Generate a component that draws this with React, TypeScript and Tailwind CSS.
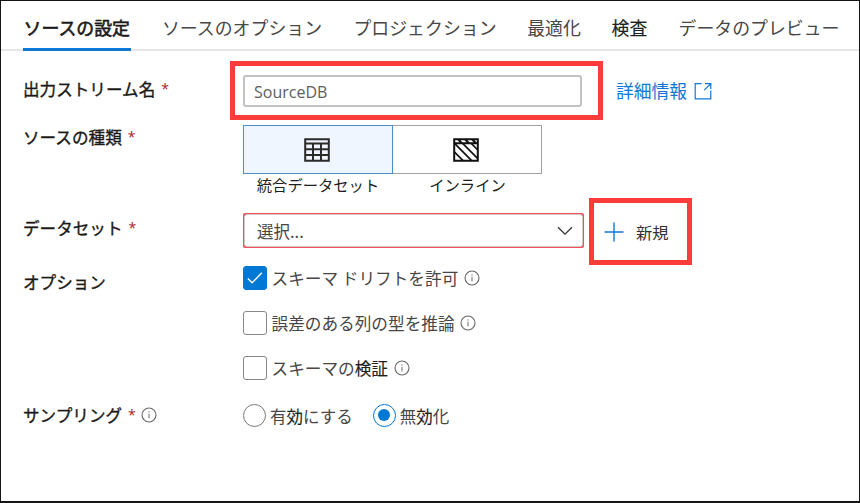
import type { ReactNode } from "react";

function InfoIcon() {
  return (
    <svg width="16" height="16" viewBox="0 0 16 16" fill="none" className="shrink-0">
      <circle cx="8" cy="8" r="7" stroke="#666" strokeWidth="1.1" />
      <path d="M8 6.8v4.4" stroke="#777" strokeWidth="1.1" />
      <circle cx="8" cy="4.9" r="0.7" fill="#777" />
    </svg>
  );
}

function Tab({ width, active, children }: { width: string; active?: boolean; children: ReactNode }) {
  return (
    <div
      className={`${width} flex h-[50px] shrink-0 items-center justify-center whitespace-nowrap border-b-[3px] pt-[7px] text-[17.9px] ${
        active
          ? "border-[#0f78d4] text-[#1b1a19] [-webkit-text-stroke:0.6px_#1b1a19]"
          : "border-transparent text-[#484644]"
      }`}
    >
      {children}
    </div>
  );
}

function Label({ children, required }: { children: ReactNode; required?: boolean }) {
  return (
    <div className="flex h-6 items-center whitespace-nowrap text-[16.6px] text-[#1b1a19]">
      <span className="[-webkit-text-stroke:0.35px_#1b1a19]">{children}</span>
      {required && <span className="ml-[6px] font-['Open_Sans'] text-[14px] text-[#a4262c]">*</span>}
    </div>
  );
}

function Strong({ children }: { children: ReactNode }) {
  return <span className="text-[#201f1e] [-webkit-text-stroke:0.15px_#201f1e]">{children}</span>;
}

function Option({ checked, children }: { checked?: boolean; children: ReactNode }) {
  return (
    <div className="flex h-6 items-center text-[16.65px] text-[#484644]">
      <div
        className={`flex size-[23.5px] shrink-0 items-center justify-center rounded-[3px] border-[1.5px] ${
          checked ? "border-[#0078d4] bg-[#0078d4]" : "border-[#8a8886] bg-white"
        }`}
      >
        {checked && (
          <svg width="18" height="18" viewBox="0 0 18 18" fill="none" className="shrink-0">
            <path d="M1.8 9.5l4.4 4.3L15.8 3.8" stroke="white" strokeWidth="1.4" />
          </svg>
        )}
      </div>
      <span className="ml-[5px] mr-[5.5px] whitespace-nowrap">{children}</span>
      <InfoIcon />
    </div>
  );
}

function Radio({ checked, children }: { checked?: boolean; children: ReactNode }) {
  return (
    <div className="flex h-6 items-center text-[16.5px] text-[#484644]">
      <div
        className={`flex size-[23px] shrink-0 items-center justify-center rounded-full border bg-white ${
          checked ? "border-[#0078d4]" : "border-[#7a7876]"
        }`}
      >
        {checked && <div className="size-[12px] rounded-full bg-[#0078d4]" />}
      </div>
      <span className="ml-1 mt-[2px] whitespace-nowrap">{children}</span>
    </div>
  );
}

export default function App() {
  return (
    <div className="flex h-[503px] w-[860px] flex-col overflow-hidden border border-b-2 border-[#151515] bg-white font-['Noto_Sans_CJK_JP',sans-serif] leading-none">
      <div className="flex h-[50px] shrink-0 gap-[31px] bg-[linear-gradient(#e6e6e6,#e6e6e6)] bg-[length:100%_2px] bg-bottom bg-no-repeat pl-[22px]">
        <Tab width="w-[107.5px]" active>ソースの設定</Tab>
        <Tab width="w-[161px]">ソースのオプション</Tab>
        <Tab width="w-[143px]">プロジェクション</Tab>
        <Tab width="w-[53px]">最適化</Tab>
        <Tab width="w-[36px]"><Strong>検査</Strong></Tab>
        <Tab width="w-[161px]">データのプレビュー</Tab>
      </div>

      <div className="flex h-[74px] shrink-0 items-start pl-[22px] pt-[10px]">
        <div className="w-[207px] shrink-0 pt-4">
          <Label required>出力ストリーム名</Label>
        </div>
        <div className="flex h-[59px] w-[373px] shrink-0 items-center border-[5px] border-[#fc3b3b] pl-[8px]">
          <div className="flex h-8 w-[339px] items-center rounded-[3px] border-2 border-[#c2c2c2] pl-[9px] pt-[2px] font-['Open_Sans'] text-[16px] text-[#605e5c]">
            SourceDB
          </div>
        </div>
        <div className="ml-[13px] mt-[18px] flex h-6 items-center text-[17.8px] text-[#1078d4]">
          <span className="whitespace-nowrap">詳細情報</span>
          <svg width="18" height="18" viewBox="0 0 18 18" fill="none" className="ml-[7px]" stroke="#1078d4" strokeWidth="1.2">
            <path d="M7.5 1.6H1.2v15.2h15.6V8.5M11 1.6h5.8V7M16.6 1.8L10.2 8.2" />
          </svg>
        </div>
      </div>

      <div className="flex h-[88px] shrink-0 items-start pl-[22px]">
        <div className="w-[220px] shrink-0">
          <Label required>ソースの種類</Label>
        </div>
        <div className="flex text-[15.3px] text-[#201f1e]">
          <div className="w-[150px]">
            <div className="flex h-[49px] items-center justify-center border border-[#4a90c8] bg-[#eff6ff] pr-[2px]">
              <svg width="26" height="24" viewBox="0 0 26 24" fill="none" stroke="#2b2b2b" strokeWidth="2">
                <path d="M1.2 1.2h23.6v21.6H1.2zM1.2 5.4h23.6M1.2 11.2h23.6M1.2 17h23.6M9 5.4v17.4M17 5.4v17.4" />
              </svg>
            </div>
            <div className="flex h-[21px] items-center justify-center whitespace-nowrap">統合データセット</div>
          </div>
          <div className="w-[149px]">
            <div className="flex h-[49px] items-center justify-center border border-l-0 border-[#a0a0a0] pr-[3px]">
              <svg width="26" height="24" viewBox="0 0 26 24" fill="none" stroke="#111" strokeWidth="2">
                <path d="M1.2 1.2h23.6v21.6H1.2zM1.2 5.2h23.6M5 1.2l4 4M12 1.2l4 4M19 1.2l4 4" />
                <path d="M1.3 5.2l17.6 17.6M9.4 5.2l15.4 15.4M1.3 13.8l9 9M18 5.2l6.8 6.8" strokeWidth="1.7" />
              </svg>
            </div>
            <div className="flex h-[21px] items-center justify-center whitespace-nowrap">インライン</div>
          </div>
        </div>
      </div>

      <div className="flex h-[53px] shrink-0 items-start pl-[22px]">
        <div className="w-[220px] shrink-0 pt-[3px]">
          <Label required>データセット</Label>
        </div>
        <div className="flex h-[35px] w-[341px] shrink-0 rounded-[2px] bg-[#f0505c] p-[1px]">
          <div className="flex w-full items-center justify-between rounded-[3px] border border-[#d2c8c8] bg-white pl-3 pr-[9px] text-[16.5px] text-[#484644]">
            <span className="mt-px">選択...</span>
            <svg width="16" height="10" viewBox="0 0 16 10" fill="none">
              <path d="M1 1.2l7 7 7-7" stroke="#323130" strokeWidth="1.3" />
            </svg>
          </div>
        </div>
        <div className="ml-[5px] -mt-[15px] flex h-[67px] w-[103px] shrink-0 items-center border-[5px] border-[#fc3b3b] pl-[10px] text-[16.3px] text-[#323130]">
          <svg width="20" height="20" viewBox="0 0 20 20" fill="none">
            <path d="M10 .5v19M.5 10h19" stroke="#1078d4" strokeWidth="1.4" />
          </svg>
          <span className="ml-3 mt-px whitespace-nowrap">新規</span>
        </div>
      </div>

      <div className="flex h-[137px] shrink-0 items-start pl-[22px]">
        <div className="w-[220px] shrink-0 pt-1">
          <Label>オプション</Label>
        </div>
        <div className="flex flex-col gap-[21px]">
          <Option checked>スキーマ ドリフトを許可</Option>
          <Option>誤差のある列の型を推論</Option>
          <Option>スキーマの<Strong>検証</Strong></Option>
        </div>
      </div>

      <div className="flex h-6 shrink-0 items-center pl-[22px]">
        <div className="flex w-[220px] shrink-0 items-center gap-[5px]">
          <Label required>サンプリング</Label>
          <InfoIcon />
        </div>
        <div className="flex gap-5">
          <Radio>有<Strong>効</Strong>にする</Radio>
          <Radio checked>無<Strong>効</Strong>化</Radio>
        </div>
      </div>
    </div>
  );
}
